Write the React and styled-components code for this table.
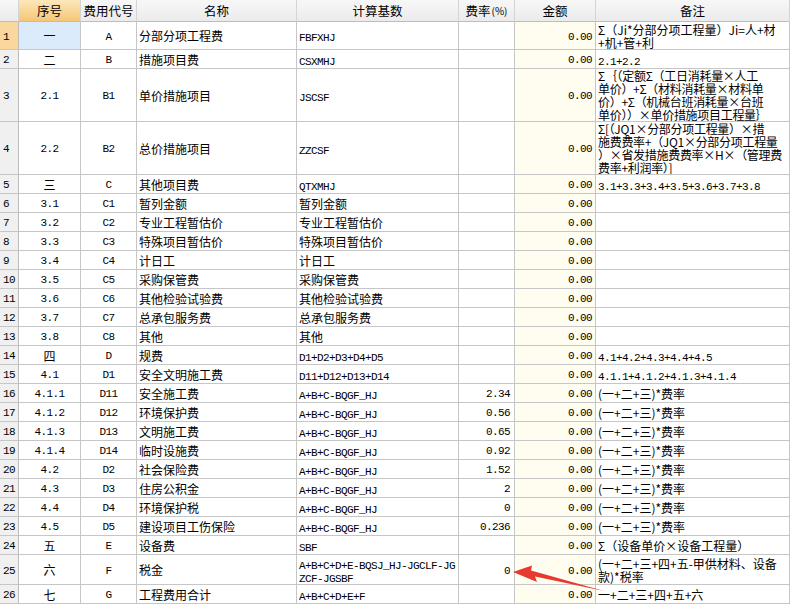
import React from 'react';
import styled, { createGlobalStyle } from 'styled-components';

const GlobalStyle = createGlobalStyle`
  html, body { margin: 0; padding: 0; background: #fff; }
`;

const COLS = '19px 62px 56px 160px 162px 56px 81px 194px';
const LINE = '#c6c6c6';
const CJK = '"Noto Sans CJK SC", "Noto Sans", sans-serif';
const MONO = '"Liberation Mono", "DejaVu Sans Mono", "Noto Sans CJK SC", monospace';

const Latin = styled.span`
  position: relative;
  font-family: ${MONO};
  font-size: 11px;
  letter-spacing: -0.6px;
`;

const Sheet = styled.div`
  position: relative;
  width: 790px;
  font-family: ${CJK};
  font-size: 12px;
  color: #000;
`;

const Row = styled.div`
  display: grid;
  grid-template-columns: ${COLS};
  height: ${p => p.$h || 19}px;
`;

const Cell = styled.div`
  box-sizing: border-box;
  display: flex;
  align-items: center;
  padding: 0 2px;
  border-right: 1px solid ${LINE};
  border-bottom: 1px solid ${LINE};
  background: #fff;
  overflow: hidden;
  white-space: nowrap;
  line-height: 13px;

  & > ${Latin} {
    top: 1.5px;
  }
`;

const HeadCell = styled(Cell)`
  justify-content: center;
  border-right-color: #d4d4d4;
  border-bottom-color: #bdbdbd;
  background: ${p => p.$active
    ? 'linear-gradient(#fde7ba, #f4c776)'
    : 'linear-gradient(#f7f7f7, #ebebeb)'};
  font-size: 12.5px;
`;

const Small = styled.span`
  font-size: 10px;
  margin-left: 1px;
`;

const NumCell = styled(Cell)`
  padding-left: 3px;
  background: ${p => p.$active ? '#f9d79d' : '#f0f0f0'};
  border-right-color: #bdbdbd;
`;

const CenterCell = styled(Cell)`
  justify-content: center;
  background: ${p => p.$active ? '#dcebfb' : '#fff'};
`;

const NameCell = styled(Cell)`
  padding-left: 2px;
`;

const BaseCell = styled(Cell)`
  flex-direction: column;
  align-items: flex-start;
  justify-content: center;
  padding-left: 2px;
`;

const RateCell = styled(Cell)`
  justify-content: flex-end;
  padding-right: 4px;
`;

const AmountCell = styled(Cell)`
  justify-content: flex-end;
  padding-right: 3px;
  background: #fffdef;
`;

const NoteCell = styled(Cell)`
  flex-direction: column;
  align-items: flex-start;
  justify-content: center;
  padding-left: 2px;
  letter-spacing: ${p => p.$tight ? '-0.3px' : '0'};
`;

const Line = styled.div`
  height: 13px;
`;

const Arrow = styled.svg`
  position: absolute;
  left: 0;
  top: 0;
  pointer-events: none;
`;

const mix = (t) =>
  t.split(/([\x20-\x7e]+)/).filter(Boolean).map((s, i) =>
    /^[\x20-\x7e]+$/.test(s) ? <Latin key={i}>{s}</Latin> : <span key={i}>{s}</span>
  );

const RATE_NOTE = ['(一+二+三)*费率'];

const rows = [
  { seq: '一', code: 'A', name: '分部分项工程费', base: ['FBFXHJ'], note: ['Σ（Ji*分部分项工程量）Ji=人+材', '+机+管+利'], h: 28, active: true },
  { seq: '二', code: 'B', name: '措施项目费', base: ['CSXMHJ'], note: ['2.1+2.2'], mono: true },
  { seq: '2.1', code: 'B1', name: '单价措施项目', base: ['JSCSF'], h: 53, tight: true, note: ['Σ｛（定额Σ（工日消耗量×人工', '单价）+Σ（材料消耗量×材料单', '价）+Σ（机械台班消耗量×台班', '单价））×单价措施项目工程量｝'] },
  { seq: '2.2', code: 'B2', name: '总价措施项目', base: ['ZZCSF'], h: 53, tight: true, note: ['Σ[（JQ1×分部分项工程量）×措', '施费费率+（JQ1×分部分项工程量', '）×省发措施费费率×H×（管理费', '费率+利润率）]'] },
  { seq: '三', code: 'C', name: '其他项目费', base: ['QTXMHJ'], note: ['3.1+3.3+3.4+3.5+3.6+3.7+3.8'], mono: true },
  { seq: '3.1', code: 'C1', name: '暂列金额', base: ['暂列金额'] },
  { seq: '3.2', code: 'C2', name: '专业工程暂估价', base: ['专业工程暂估价'] },
  { seq: '3.3', code: 'C3', name: '特殊项目暂估价', base: ['特殊项目暂估价'] },
  { seq: '3.4', code: 'C4', name: '计日工', base: ['计日工'] },
  { seq: '3.5', code: 'C5', name: '采购保管费', base: ['采购保管费'] },
  { seq: '3.6', code: 'C6', name: '其他检验试验费', base: ['其他检验试验费'] },
  { seq: '3.7', code: 'C7', name: '总承包服务费', base: ['总承包服务费'] },
  { seq: '3.8', code: 'C8', name: '其他', base: ['其他'] },
  { seq: '四', code: 'D', name: '规费', base: ['D1+D2+D3+D4+D5'], note: ['4.1+4.2+4.3+4.4+4.5'], mono: true },
  { seq: '4.1', code: 'D1', name: '安全文明施工费', base: ['D11+D12+D13+D14'], note: ['4.1.1+4.1.2+4.1.3+4.1.4'], mono: true },
  { seq: '4.1.1', code: 'D11', name: '安全施工费', base: ['A+B+C-BQGF_HJ'], rate: '2.34', note: RATE_NOTE },
  { seq: '4.1.2', code: 'D12', name: '环境保护费', base: ['A+B+C-BQGF_HJ'], rate: '0.56', note: RATE_NOTE },
  { seq: '4.1.3', code: 'D13', name: '文明施工费', base: ['A+B+C-BQGF_HJ'], rate: '0.65', note: RATE_NOTE },
  { seq: '4.1.4', code: 'D14', name: '临时设施费', base: ['A+B+C-BQGF_HJ'], rate: '0.92', note: RATE_NOTE },
  { seq: '4.2', code: 'D2', name: '社会保险费', base: ['A+B+C-BQGF_HJ'], rate: '1.52', note: RATE_NOTE },
  { seq: '4.3', code: 'D3', name: '住房公积金', base: ['A+B+C-BQGF_HJ'], rate: '2', note: RATE_NOTE },
  { seq: '4.4', code: 'D4', name: '环境保护税', base: ['A+B+C-BQGF_HJ'], rate: '0', note: RATE_NOTE },
  { seq: '4.5', code: 'D5', name: '建设项目工伤保险', base: ['A+B+C-BQGF_HJ'], rate: '0.236', note: RATE_NOTE },
  { seq: '五', code: 'E', name: '设备费', base: ['SBF'], note: ['Σ（设备单价×设备工程量）'] },
  { seq: '六', code: 'F', name: '税金', base: ['A+B+C+D+E-BQSJ_HJ-JGCLF-JG', 'ZCF-JGSBF'], rate: '0', h: 30, note: ['(一+二+三+四+五-甲供材料、设备', '款)*税率'] },
  { seq: '七', code: 'G', name: '工程费用合计', base: ['A+B+C+D+E+F'], note: ['一+二+三+四+五+六'] },
];

export default function App() {
  return (
    <>
      <GlobalStyle />
      <Sheet>
        <Row $h={22}>
          <HeadCell />
          <HeadCell $active>序号</HeadCell>
          <HeadCell>费用代号</HeadCell>
          <HeadCell>名称</HeadCell>
          <HeadCell>计算基数</HeadCell>
          <HeadCell>费率<Small>(%)</Small></HeadCell>
          <HeadCell>金额</HeadCell>
          <HeadCell>备注</HeadCell>
        </Row>
        {rows.map((r, i) => (
          <Row key={i} $h={r.h}>
            <NumCell $active={r.active}><Latin>{i + 1}</Latin></NumCell>
            <CenterCell $active={r.active}>{mix(r.seq)}</CenterCell>
            <CenterCell><Latin>{r.code}</Latin></CenterCell>
            <NameCell>{r.name}</NameCell>
            <BaseCell>
              {r.base.map((l, j) => <Line key={j}>{mix(l)}</Line>)}
            </BaseCell>
            <RateCell>{r.rate && <Latin>{r.rate}</Latin>}</RateCell>
            <AmountCell><Latin>0.00</Latin></AmountCell>
            <NoteCell $tight={r.tight}>
              {(r.note || []).map((l, j) => (
                <Line key={j}>{r.mono ? <Latin>{l}</Latin> : l}</Line>
              ))}
            </NoteCell>
          </Row>
        ))}
        <Arrow width="790" height="608" viewBox="0 0 790 608">
          <polygon
            points="513,572 532,565.5 531,570.5 604,591 535,576.5 537,582"
            fill="#e8392f"
          />
        </Arrow>
      </Sheet>
    </>
  );
}
